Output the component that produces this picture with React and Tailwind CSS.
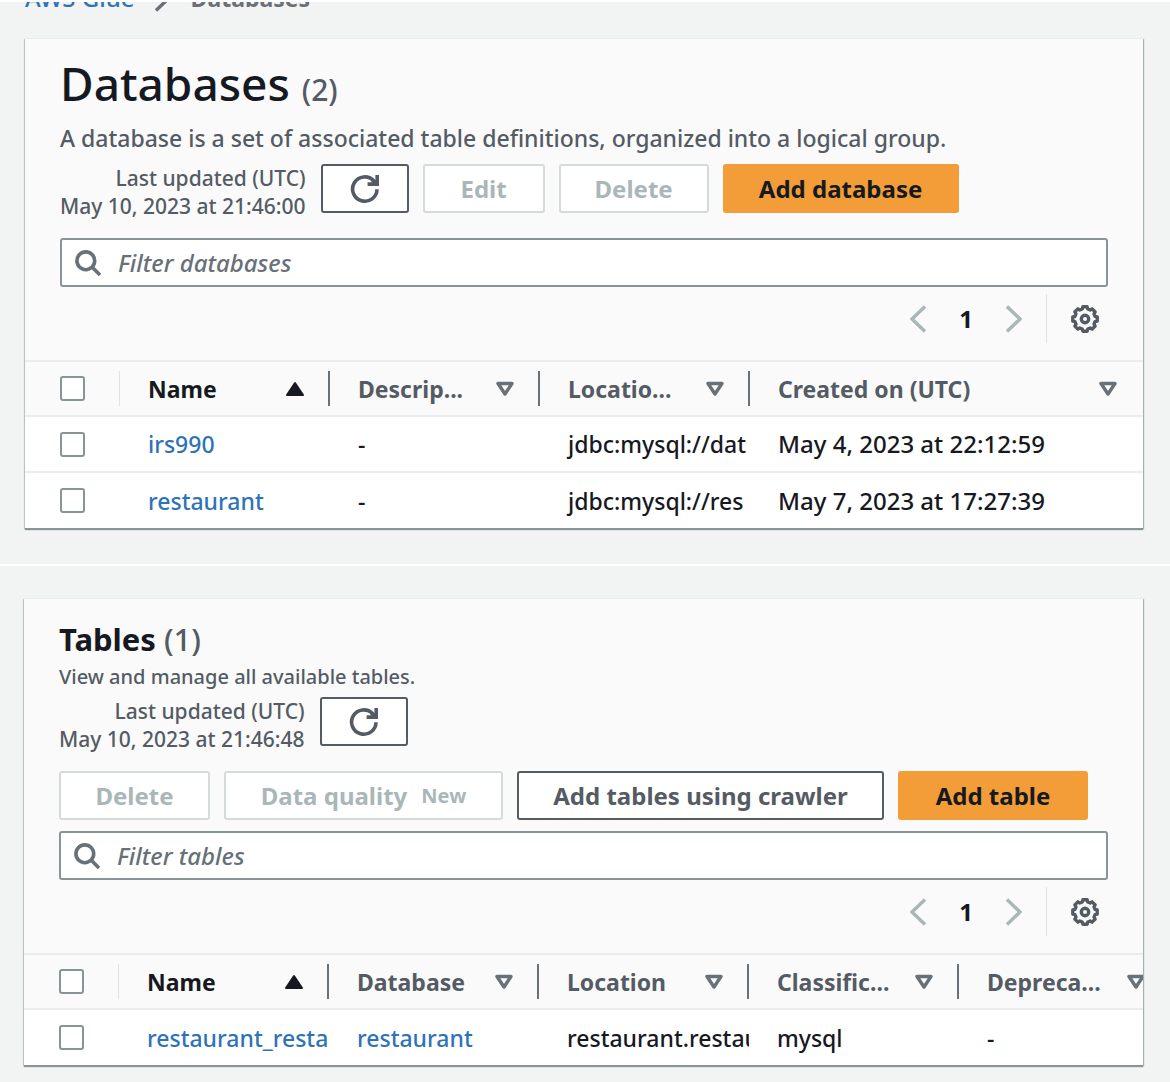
import React from "react";

const GEAR_POINTS = Array.from({ length: 8 }, (_, k) =>
  [
    [-15, 10.4],
    [-10, 12.4],
    [10, 12.4],
    [15, 10.4],
  ].map(([offset, radius]) => {
    const angle = ((k * 45 + offset) * Math.PI) / 180;
    return `${(14 + radius * Math.cos(angle)).toFixed(2)},${(14 + radius * Math.sin(angle)).toFixed(2)}`;
  })
)
  .flat()
  .join(" ");

function GearIcon() {
  return (
    <svg className="size-7" viewBox="0 0 28 28" fill="none" stroke="currentColor" strokeWidth="3.4" strokeLinejoin="round" aria-hidden="true">
      <polygon points={GEAR_POINTS} />
      <circle cx="14" cy="14" r="3.7" />
    </svg>
  );
}

function RefreshIcon() {
  return (
    <svg className="size-8" viewBox="0 0 32 32" fill="none" stroke="currentColor" strokeWidth="3.6" aria-hidden="true">
      <path d="M28 16.2A12.2 12.2 0 1 1 24.6 7.6L27 10.4" />
      <path d="M28.2 2V11.1H18.6" />
      <path d="M23 7.5L28 10" />
    </svg>
  );
}

function SearchIcon() {
  return (
    <svg className="size-7 shrink-0 text-[#687078]" viewBox="0 0 28 28" fill="none" stroke="currentColor" strokeWidth="3.6" aria-hidden="true">
      <circle cx="11.8" cy="11.8" r="8.9" />
      <path d="M18 18L26 26" />
    </svg>
  );
}

function Chevron({ right }) {
  return (
    <svg className="h-7 w-4" viewBox="0 0 16 28" fill="none" stroke="currentColor" strokeWidth="3.4" aria-hidden="true">
      <path d={right ? "M1 1.5L14 14L1 26.5" : "M15 1.5L2 14L15 26.5"} />
    </svg>
  );
}

function SortIcon({ ascending }) {
  return ascending ? (
    <svg className="h-4 w-[18px] shrink-0" viewBox="0 0 18 16" fill="currentColor" stroke="currentColor" strokeWidth="2" strokeLinejoin="round" aria-hidden="true">
      <path d="M9 2L17 14H1Z" />
    </svg>
  ) : (
    <svg className="h-4 w-[18px] shrink-0 text-[#687078]" viewBox="0 0 18 16" fill="none" stroke="currentColor" strokeWidth="3.4" strokeLinejoin="round" aria-hidden="true">
      <path d="M2 2.5H16L9 13Z" />
    </svg>
  );
}

const BUTTON_STYLES = {
  normal: "border-[#545b64] bg-white text-[#545b64]",
  disabled: "border-[#d5dbdb] bg-white text-[#aab7b8]",
  primary: "border-[#f29d38] bg-[#f29d38] text-[#16191f]",
};

function Button({ kind = "normal", className = "", children, ...rest }) {
  return (
    <button
      type="button"
      disabled={kind === "disabled"}
      className={`flex h-[49px] items-center justify-center rounded-[3px] border-2 text-[24px] leading-8 font-bold whitespace-nowrap ${BUTTON_STYLES[kind]} ${className}`}
      {...rest}
    >
      {children}
    </button>
  );
}

function LastUpdated({ time, className = "" }) {
  return (
    <div className={`flex items-start gap-[15px] ${className}`}>
      <p className="text-right text-[21px] leading-7 font-medium text-[#545b64]">
        Last updated (UTC)
        <br />
        {time}
      </p>
      <Button className="w-[88px]" aria-label="Refresh">
        <RefreshIcon />
      </Button>
    </div>
  );
}

function Filter({ label, className = "" }) {
  return (
    <label className={`flex h-[49px] items-center gap-4 rounded-[3px] border-2 border-[#879596] bg-white px-3 ${className}`}>
      <SearchIcon />
      <input
        type="text"
        aria-label={label}
        placeholder={label}
        className="min-w-0 flex-1 bg-transparent text-[24px] leading-8 font-medium text-[#16191f] outline-none placeholder:text-[#687078] placeholder:italic"
      />
    </label>
  );
}

function Pagination() {
  return (
    <nav aria-label="Pagination" className="mt-[7px] mb-[17px] flex h-[49px] items-center justify-end text-[#aab7b8]">
      <button type="button" aria-label="Previous page" disabled>
        <Chevron />
      </button>
      <button type="button" aria-current="page" className="w-20 text-[24px] font-bold text-[#16191f]">
        1
      </button>
      <button type="button" aria-label="Next page" disabled>
        <Chevron right />
      </button>
      <span className="ml-6 h-full w-px bg-[#e1e4e4]" />
      <button type="button" aria-label="Preferences" className="mr-[9px] ml-6 text-[#545b64]">
        <GearIcon />
      </button>
    </nav>
  );
}

function Checkbox({ label }) {
  return (
    <input
      type="checkbox"
      aria-label={label}
      className="block size-[25px] appearance-none rounded-[3px] border-2 border-[#879596] bg-white checked:bg-[#0073bb]"
    />
  );
}

function DataTable({ columns, rows, className = "" }) {
  return (
    <div className="overflow-hidden">
      <table className={`w-full table-fixed border-collapse ${className}`}>
        <thead>
          <tr className="h-[55px] border-t-2 border-[#eaeded]">
            <th className="w-[95px] p-0">
              <div className="flex h-[35px] items-center justify-between pl-[35px]">
                <Checkbox label="Select all" />
                <span className="h-full w-px bg-[#e1e4e4]" />
              </div>
            </th>
            {columns.map((column) => (
              <th key={column.label} className={`p-0 text-left ${column.fill ? "" : "w-[210px]"}`}>
                <div className={`flex h-[35px] items-center pl-7 ${column.ascending ? "text-[#16191f]" : "text-[#545b64]"}`}>
                  <span className="min-w-0 flex-1 text-[23px] leading-8 font-bold whitespace-nowrap">{column.label}</span>
                  <button type="button" aria-label={`Sort by ${column.name || column.label}`} className={column.fill ? "mr-[26px]" : "mr-6"}>
                    <SortIcon ascending={column.ascending} />
                  </button>
                  {!column.last && <span className="h-full w-[2px] bg-[#687078]" />}
                </div>
              </th>
            ))}
          </tr>
        </thead>
        <tbody>
          {rows.map((row) => (
            <tr key={row[0].text} className="h-14 border-t-2 border-[#eaeded] bg-white">
              <td className="p-0 pl-[35px]">
                <Checkbox label={`Select ${row[0].text}`} />
              </td>
              {row.map((cell, i) => (
                <td
                  key={i}
                  className={`overflow-hidden p-0 pl-7 leading-8 font-medium whitespace-nowrap text-[#16191f] ${cell.date ? "text-[24px]" : "text-[23px]"}`}
                >
                  {cell.link ? (
                    <a href="#" className="text-[#2e73b8]">
                      {cell.text}
                    </a>
                  ) : (
                    cell.text
                  )}
                </td>
              ))}
            </tr>
          ))}
        </tbody>
      </table>
    </div>
  );
}

const CARD = "border-t border-[#eaeded] bg-[#fafafa] shadow-[0_2px_1px_#879596,1px_1px_1px_#aab7b8,-1px_1px_1px_#c5cccc]";

export default function App() {
  return (
    <main className="min-h-screen bg-[#f2f3f3] font-['Noto_Sans','Open_Sans',sans-serif] text-[#16191f]">
      <div className="overflow-hidden border-t-2 border-white pr-[27px] pb-9 pl-[25px]">
        <nav aria-label="Breadcrumb" className="-mt-5 mb-6 flex h-8 items-center text-[24px] leading-8">
          <a href="#" className="font-medium text-[#2e73b8]">
            AWS Glue
          </a>
          <span className="mx-5 text-[#687078]">
            <Chevron right />
          </span>
          <span className="text-[23px] font-bold text-[#687078]">Databases</span>
        </nav>

        <section className={CARD}>
          <header className="px-[35px] pt-[14px]">
            <h1 className="flex items-baseline gap-3 text-[46px] leading-[60px] font-medium">
              Databases <span className="text-[30px] text-[#545b64]">(2)</span>
            </h1>
            <p className="mt-[2px] text-[23px] leading-8 font-medium text-[#545b64]">
              A database is a set of associated table definitions, organized into a logical group.
            </p>
            <div className="mt-[10px] flex flex-wrap items-start gap-[14px]">
              <LastUpdated time="May 10, 2023 at 21:46:00" />
              <Button kind="disabled" className="w-[122px]">Edit</Button>
              <Button kind="disabled" className="w-[150px]">Delete</Button>
              <Button kind="primary" className="w-[236px]">Add database</Button>
            </div>
            <Filter label="Filter databases" className="mt-[18px]" />
            <Pagination />
          </header>
          <DataTable
            columns={[
              { label: "Name", ascending: true },
              { label: "Descrip...", name: "Description" },
              { label: "Locatio...", name: "Location URI" },
              { label: "Created on (UTC)", fill: true, last: true },
            ]}
            rows={[
              [{ text: "irs990", link: true }, { text: "-" }, { text: "jdbc:mysql://dat" }, { text: "May 4, 2023 at 22:12:59", date: true }],
              [{ text: "restaurant", link: true }, { text: "-" }, { text: "jdbc:mysql://res" }, { text: "May 7, 2023 at 17:27:39", date: true }],
            ]}
          />
        </section>
      </div>

      <div className="border-t-2 border-white pt-8 pr-[27px] pb-4 pl-6">
        <section className={CARD}>
          <header className="px-[35px] pt-5">
            <h2 className="text-[31px] leading-10 font-bold">
              Tables <span className="font-medium text-[#545b64]">(1)</span>
            </h2>
            <p className="mt-1 text-[20px] leading-7 font-medium text-[#545b64]">View and manage all available tables.</p>
            <LastUpdated time="May 10, 2023 at 21:46:48" className="mt-[6px]" />
            <div className="mt-[18px] flex flex-wrap gap-[14px]">
              <Button kind="disabled" className="w-[151px]">Delete</Button>
              <Button kind="disabled" className="w-[279px] gap-[14px]">
                Data quality <span className="text-[20px]">New</span>
              </Button>
              <Button className="w-[367px]">Add tables using crawler</Button>
              <Button kind="primary" className="w-[190px]">Add table</Button>
            </div>
            <Filter label="Filter tables" className="mt-[11px]" />
            <Pagination />
          </header>
          <DataTable
            className="min-w-[1145px]"
            columns={[
              { label: "Name", ascending: true },
              { label: "Database" },
              { label: "Location" },
              { label: "Classific...", name: "Classification" },
              { label: "Depreca...", name: "Deprecated", last: true },
            ]}
            rows={[
              [
                { text: "restaurant_resta", link: true },
                { text: "restaurant", link: true },
                { text: "restaurant.restau" },
                { text: "mysql" },
                { text: "-" },
              ],
            ]}
          />
        </section>
      </div>
    </main>
  );
}
